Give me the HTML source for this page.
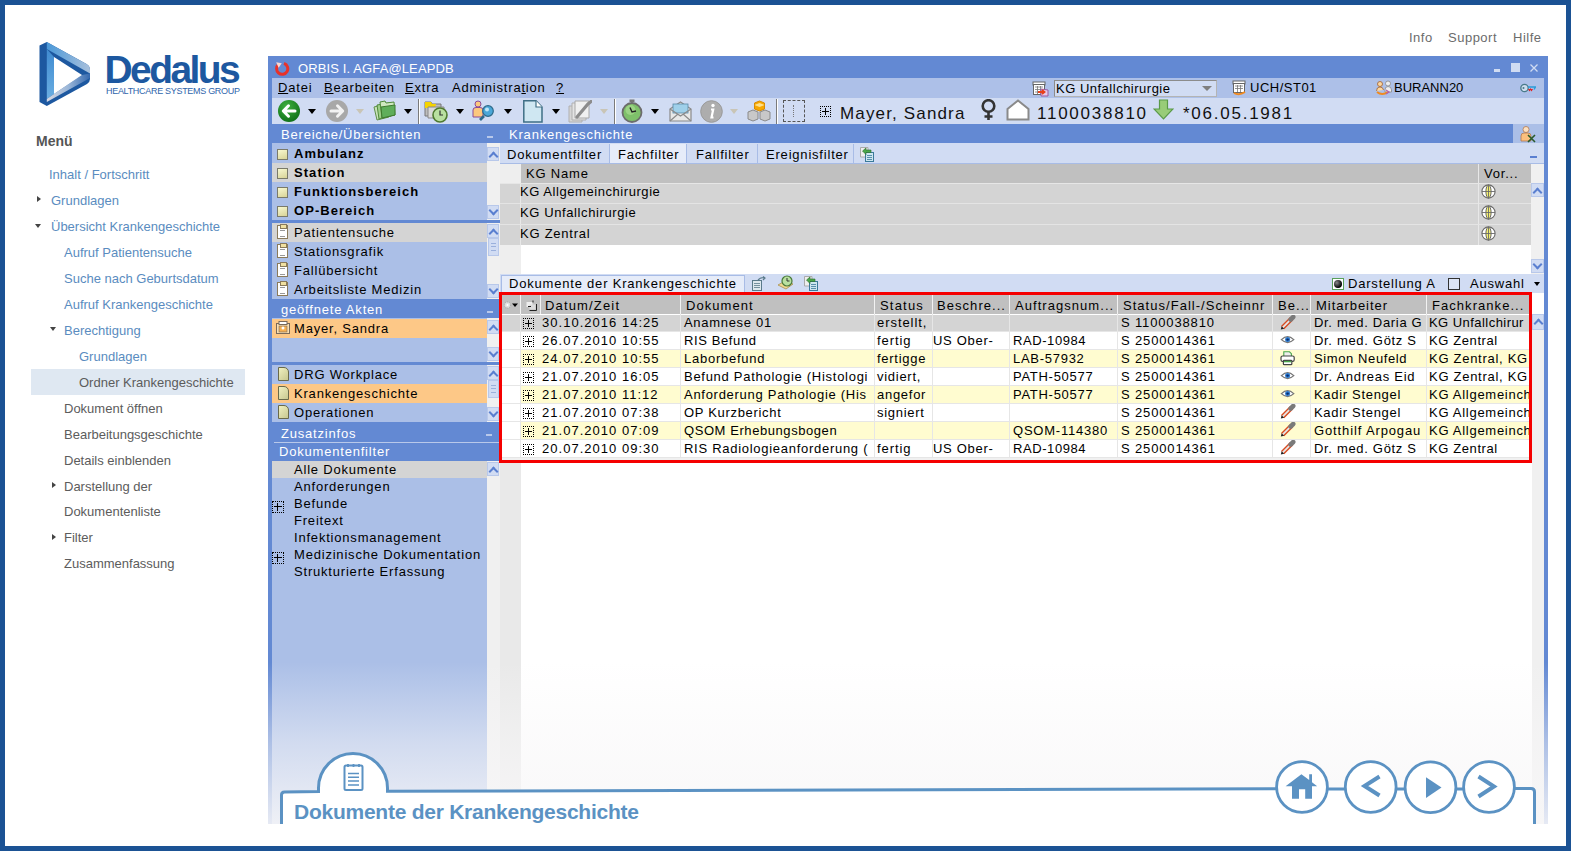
<!DOCTYPE html>
<html><head><meta charset="utf-8">
<style>
*{box-sizing:border-box}
html,body{margin:0;padding:0}
body{width:1571px;height:851px;position:relative;overflow:hidden;background:#fff;font-family:"Liberation Sans",sans-serif;color:#000}
.a{position:absolute}
.t{position:absolute;white-space:nowrap;line-height:1}
.app{font-size:13px;letter-spacing:0.8px}
.menu .t{font-size:13px;color:#5a8cc0}
.menu .g{color:#5c5c5c}
.b{font-weight:bold;letter-spacing:1.05px}
.sq{position:absolute;left:9px;width:11px;height:11px;background:linear-gradient(160deg,#f8f8d0,#d8d498);border:1px solid #7a7a6a}
.clip{position:absolute;left:9px;width:11px;height:14px;background:#fff;border:1px solid #8a7a5a}
.clip:after{content:"";position:absolute;left:2px;top:-2px;width:5px;height:3px;background:#f0e0a0;border:1px solid #8a7a5a}
.clip:before{content:"";position:absolute;left:2px;top:4px;width:5px;height:5px;border-top:1px solid #999;border-bottom:1px solid #999}
.pg{position:absolute;left:10px;width:11px;height:14px;background:linear-gradient(135deg,#f0f0c0,#c8c890);border:1px solid #6a6a4a;border-radius:0 5px 0 0}
.pb{position:absolute;left:4px;width:12px;height:12px;border:1px dotted #000}
.pb:after{content:"";position:absolute;left:4px;top:1px;width:1px;height:8px;background:#000}
.pb:before{content:"";position:absolute;left:1px;top:4px;width:8px;height:1px;background:#000}
.sbu,.sbd{position:absolute;width:12px;height:14px;background:#d1dcf3;border:1px solid #b8c8ea}
.sbu:after,.sbd:after{content:"";position:absolute;left:2px;width:5px;height:5px;border-left:2px solid #5a7fd0;border-top:2px solid #5a7fd0}
.sbu:after{top:5px;transform:rotate(45deg)}
.sbd:after{top:1px;transform:rotate(225deg)}
.kgr{position:absolute;left:232px;width:1031px;height:20px;background:#d4d4d4;border-bottom:1px solid #e4e4e4}
.kgr:before{content:"";position:absolute;left:20px;top:0;width:1px;height:20px;background:#e8e8e8}
.kgr:after{content:"";position:absolute;left:978px;top:0;width:1px;height:20px;background:#e8e8e8}
.glb{position:absolute;left:1213px;width:15px;height:15px}
.pb2{position:absolute;width:11px;height:11px;border:1px dotted #000}
.pb2:before{content:"";position:absolute;left:1px;top:4px;width:7px;height:1px;background:#000}
.pb2:after{content:"";position:absolute;left:4px;top:1px;width:1px;height:7px;background:#000}
.app .t{margin-top:-1px}
.tri{position:absolute;width:0;height:0}
</style></head>
<body>
<!-- outer frame -->
<div class="a" style="left:0;top:0;width:1571px;height:851px;border:5px solid #1b5294"></div>

<!-- top links -->
<div class="t" style="left:1409px;top:31px;font-size:13px;color:#6b6b6b;letter-spacing:0.5px">Info</div>
<div class="t" style="left:1448px;top:31px;font-size:13px;color:#6b6b6b;letter-spacing:0.5px">Support</div>
<div class="t" style="left:1513px;top:31px;font-size:13px;color:#6b6b6b;letter-spacing:0.5px">Hilfe</div>

<!-- logo -->
<svg class="a" style="left:30px;top:35px" width="70" height="80" viewBox="30 35 70 80">
  <defs>
    <linearGradient id="lgt" x1="0" y1="0" x2="1" y2="0"><stop offset="0" stop-color="#4a98d8"/><stop offset="1" stop-color="#a8c0dc"/></linearGradient>
    <linearGradient id="lgb" x1="0" y1="0" x2="1" y2="0"><stop offset="0" stop-color="#d8d8e2"/><stop offset="0.5" stop-color="#9ab6d8"/><stop offset="1" stop-color="#3468ae"/></linearGradient>
    <linearGradient id="lgl" x1="0" y1="0" x2="0" y2="1"><stop offset="0" stop-color="#3f8ad0"/><stop offset="1" stop-color="#6aaee2"/></linearGradient>
  </defs>
  <path d="M39.5 45.5 L46.8 42 L86.5 64 Q90 66 90 70 L90 79 Q90 82 87 84 L46.8 106 L39.5 102 Z" fill="#1d58a0"/>
  <path d="M46.8 42 L86.5 64 Q90 66 90 70 L90 73.5 L46.8 49 Z" fill="url(#lgt)"/>
  <path d="M46.8 49 L54 57 L54 94 L46.8 99 Z" fill="url(#lgl)"/>
  <path d="M54 94 L82 75 L90 73.5 L90 78 L46.8 102 L46.8 99 Z" fill="url(#lgb)"/>
  <path d="M54 57 L82 75 L54 94 Z" fill="#fff"/>
</svg>
<div class="t" style="left:104.5px;top:50px;font-size:39px;font-weight:bold;color:#1d58a0;letter-spacing:-2.6px">Dedalus</div>
<div class="t" style="left:106px;top:87px;font-size:9px;color:#2d64ab;letter-spacing:-0.3px">HEALTHCARE SYSTEMS GROUP</div>

<!-- left menu -->
<div class="menu">
<div class="t" style="left:36px;top:134px;font-size:14px;font-weight:bold;color:#555">Menü</div>
<div class="t" style="left:49px;top:168px">Inhalt / Fortschritt</div>
<div class="t" style="left:51px;top:194px">Grundlagen</div>
<div class="t" style="left:51px;top:220px">Übersicht Krankengeschichte</div>
<div class="t" style="left:64px;top:246px">Aufruf Patientensuche</div>
<div class="t" style="left:64px;top:272px">Suche nach Geburtsdatum</div>
<div class="t" style="left:64px;top:298px">Aufruf Krankengeschichte</div>
<div class="t" style="left:64px;top:324px">Berechtigung</div>
<div class="t" style="left:79px;top:350px">Grundlagen</div>
<div class="a" style="left:31px;top:369px;width:214px;height:26px;background:#dfe8f2"></div>
<div class="t g" style="left:79px;top:376px">Ordner Krankengeschichte</div>
<div class="t g" style="left:64px;top:402px">Dokument öffnen</div>
<div class="t g" style="left:64px;top:428px">Bearbeitungsgeschichte</div>
<div class="t g" style="left:64px;top:454px">Details einblenden</div>
<div class="t g" style="left:64px;top:480px">Darstellung der</div>
<div class="t g" style="left:64px;top:505px">Dokumentenliste</div>
<div class="t g" style="left:64px;top:531px">Filter</div>
<div class="t g" style="left:64px;top:557px">Zusammenfassung</div>
<div class="tri" style="left:37px;top:196px;border-top:3.5px solid transparent;border-bottom:3.5px solid transparent;border-left:4px solid #444"></div>
<div class="tri" style="left:35px;top:224px;border-left:3.5px solid transparent;border-right:3.5px solid transparent;border-top:4px solid #444"></div>
<div class="tri" style="left:49.5px;top:327px;border-left:3.5px solid transparent;border-right:3.5px solid transparent;border-top:4px solid #444"></div>
<div class="tri" style="left:52px;top:481.5px;border-top:3.5px solid transparent;border-bottom:3.5px solid transparent;border-left:4px solid #444"></div>
<div class="tri" style="left:52px;top:534px;border-top:3.5px solid transparent;border-bottom:3.5px solid transparent;border-left:4px solid #444"></div>
</div>
<!-- APP WINDOW -->
<div class="a app" style="left:268px;top:56px;width:1280px;height:768px;background:#6389d3;overflow:hidden">
<!-- title bar -->
<svg class="a" style="left:6px;top:5px" width="16" height="16" viewBox="0 0 16 16"><path d="M4.6 3.4 A5.6 5.6 0 1 0 10 2.4" fill="none" stroke="#e8322a" stroke-width="3"/><path d="M2.2 1.2 L7.8 2.2 L4.6 6.8 Z" fill="#fbd8d0"/></svg>
<div class="t" style="left:30px;top:7px;color:#fff;letter-spacing:0.12px">ORBIS I. AGFA@LEAPDB</div>
<div class="a" style="left:1226px;top:13px;width:6px;height:3px;background:#d0dcf2"></div>
<div class="a" style="left:1243px;top:7px;width:9px;height:9px;background:#d0dcf2"></div>
<svg class="a" style="left:1262px;top:8px" width="8" height="8"><path d="M0.5 0.5 L7.5 7.5 M7.5 0.5 L0.5 7.5" stroke="#d0dcf2" stroke-width="1.3"/></svg>
<!-- menu bar -->
<div class="a" style="left:4px;top:22px;width:1272px;height:20px;background:#adc0e8"></div>
<div class="t" style="left:10px;top:26px"><u>D</u>atei</div>
<div class="t" style="left:56px;top:26px"><u>B</u>earbeiten</div>
<div class="t" style="left:137px;top:26px"><u>E</u>xtra</div>
<div class="t" style="left:184px;top:26px">Administra<u>t</u>ion</div>
<div class="t" style="left:288px;top:26px"><u>?</u></div>
<!-- toolbar -->
<div class="a" style="left:4px;top:42px;width:1272px;height:26px;background:#d1dcf3"></div>
<!-- back -->
<svg class="a" style="left:9px;top:43px" width="24" height="24" viewBox="0 0 24 24"><defs><radialGradient id="gb" cx="0.4" cy="0.3" r="0.8"><stop offset="0" stop-color="#3fb03f"/><stop offset="1" stop-color="#0b6a14"/></radialGradient></defs><circle cx="12" cy="12" r="11" fill="url(#gb)"/><path d="M18 12 H7 M11.5 6.8 L6.3 12 L11.5 17.2" fill="none" stroke="#fff" stroke-width="3" stroke-linecap="round" stroke-linejoin="round"/></svg>
<div class="tri" style="left:40px;top:53px;border-left:4px solid transparent;border-right:4px solid transparent;border-top:5px solid #000"></div>
<svg class="a" style="left:57px;top:43px" width="24" height="24" viewBox="0 0 24 24"><circle cx="12" cy="12" r="11" fill="#a8a8a8"/><path d="M6 12 H17 M12.5 6.8 L17.7 12 L12.5 17.2" fill="none" stroke="#f2f2f2" stroke-width="3" stroke-linecap="round" stroke-linejoin="round"/></svg>
<div class="tri" style="left:88px;top:53px;border-left:4px solid transparent;border-right:4px solid transparent;border-top:5px solid #c9c5b6"></div>
<!-- folders -->
<svg class="a" style="left:105px;top:44px" width="24" height="22" viewBox="0 0 24 22"><path d="M1 7 L13 4 L16 17 L4 20 Z" fill="#c8e3b8" stroke="#5f8f4a" stroke-width="1"/><path d="M4 5 L16 3 L18 16 L6 19 Z" fill="#9fcf8a" stroke="#4f8a3a" stroke-width="1"/><path d="M7 2 L12 1 L13 3 L21 2 L22 15 L9 18 Z" fill="#cfe8c0" stroke="#4f8a3a" stroke-width="1"/><path d="M8 7 L22 5 L22 15 L9 18 Z" fill="#5fae5a" stroke="#3f7a2f" stroke-width="1"/></svg>
<div class="tri" style="left:136px;top:53px;border-left:4px solid transparent;border-right:4px solid transparent;border-top:5px solid #000"></div>
<div class="a" style="left:150px;top:43px;width:1px;height:25px;background:#7a7a7a"></div>
<div class="a" style="left:151px;top:43px;width:1px;height:25px;background:#fff"></div>
<!-- folder clock -->
<svg class="a" style="left:156px;top:43px" width="25" height="24" viewBox="0 0 25 24"><path d="M1 3 L7 3 L8 5 L17 5 L17 17 L1 17 Z" fill="#bdbdbd" stroke="#777" stroke-width="1"/><path d="M1 3 L7 3 L8 5 L12 5 L11 9 L1 9 Z" fill="#f5d300"/><path d="M4 8 L20 8 L20 19 L4 19 Z" fill="#d9d9d9" stroke="#888" stroke-width="1"/><circle cx="16" cy="16" r="7" fill="#b9e0a0" stroke="#4f7a2f" stroke-width="1.6"/><path d="M16 11.5 V16 H19" fill="none" stroke="#333" stroke-width="1.2"/></svg>
<div class="tri" style="left:188px;top:53px;border-left:4px solid transparent;border-right:4px solid transparent;border-top:5px solid #000"></div>
<!-- person search -->
<svg class="a" style="left:204px;top:44px" width="24" height="22" viewBox="0 0 24 22"><circle cx="6" cy="4" r="3" fill="#fcc87e" stroke="#8a4a9a" stroke-width="1"/><path d="M1 17 L1 10 Q1 7.5 4 7.5 L8 7.5 Q11 7.5 11 10 L11 17 Z" fill="#fcc87e" stroke="#8a4a9a" stroke-width="1"/><path d="M8 20 L12 16" stroke="#2d6a8a" stroke-width="2.6"/><circle cx="16" cy="11" r="5.3" fill="#4aa7d8" stroke="#2d6a8a" stroke-width="1.2"/><circle cx="15" cy="9.5" r="2" fill="#bfe6f7"/></svg>
<div class="tri" style="left:236px;top:53px;border-left:4px solid transparent;border-right:4px solid transparent;border-top:5px solid #000"></div>
<!-- document -->
<svg class="a" style="left:255px;top:44px" width="20" height="23" viewBox="0 0 20 23"><path d="M0.8 0.8 L13 0.8 L19 7 L19 22 L0.8 22 Z" fill="#cfe7f2" stroke="#3f6f86" stroke-width="1.5"/><path d="M13 0.8 L13 7 L19 7" fill="#fff" stroke="#3f6f86" stroke-width="1.2"/></svg>
<div class="tri" style="left:284px;top:53px;border-left:4px solid transparent;border-right:4px solid transparent;border-top:5px solid #000"></div>
<!-- edit doc faded -->
<svg class="a" style="left:300px;top:44px" width="24" height="23" viewBox="0 0 24 23"><path d="M1 6 L14 6 L14 22 L1 22 Z" fill="#d6d6d6" stroke="#b0b0b0"/><path d="M4 3 L18 3 L18 20 L4 20 Z" fill="#e4e4e4" stroke="#b0b0b0"/><path d="M7 1 L21 1 L21 18 L7 18 Z" fill="#f0f0f0" stroke="#a8a8a8"/><path d="M9 17 L20 4 L23 1.5" stroke="#8c8c8c" stroke-width="3.2" stroke-linecap="round"/></svg>
<div class="tri" style="left:332px;top:53px;border-left:4px solid transparent;border-right:4px solid transparent;border-top:5px solid #c9c5b6"></div>
<div class="a" style="left:346px;top:43px;width:1px;height:25px;background:#7a7a7a"></div>
<div class="a" style="left:347px;top:43px;width:1px;height:25px;background:#fff"></div>
<!-- stopwatch -->
<svg class="a" style="left:353px;top:43px" width="22" height="24" viewBox="0 0 22 24"><rect x="8.5" y="0.5" width="5" height="2.5" fill="#777"/><circle cx="11" cy="13.5" r="9.5" fill="#7ec06a" stroke="#6c6c6c" stroke-width="1.8"/><circle cx="9.5" cy="11" r="5" fill="#a8dc90" opacity="0.7"/><path d="M9 8.5 L11 13 L15 12" fill="none" stroke="#222" stroke-width="1.4"/></svg>
<div class="tri" style="left:383px;top:53px;border-left:4px solid transparent;border-right:4px solid transparent;border-top:5px solid #000"></div>
<!-- envelope -->
<svg class="a" style="left:401px;top:44px" width="23" height="22" viewBox="0 0 23 22"><path d="M1 9 L11.5 2 L22 9 L22 21 L1 21 Z" fill="#e8e8e8" stroke="#8a8a8a" stroke-width="1.2"/><rect x="4" y="4" width="15" height="9" fill="#9fd0ea" stroke="#5a8aa8" stroke-width="0.8"/><path d="M1 9 L11.5 16 L22 9 M1 21 L9 14 M22 21 L14 14" fill="none" stroke="#8a8a8a" stroke-width="1.2"/></svg>
<!-- info -->
<svg class="a" style="left:432px;top:44px" width="23" height="23" viewBox="0 0 23 23"><circle cx="11.5" cy="11.5" r="10.8" fill="#adadad" stroke="#9a9a9a"/><circle cx="13" cy="5.5" r="1.7" fill="#fff"/><path d="M11 9.5 L13.2 9.5 L11.5 17.5 L13.5 17.5" fill="none" stroke="#fff" stroke-width="2.2"/></svg>
<div class="tri" style="left:462px;top:53px;border-left:4px solid transparent;border-right:4px solid transparent;border-top:5px solid #c9c5b6"></div>
<!-- cubes -->
<svg class="a" style="left:479px;top:44px" width="25" height="22" viewBox="0 0 25 22"><path d="M7.5 1 L12.5 3 L12.5 9 L7.5 11 L2.5 9 L2.5 3 Z" transform="translate(5,0)" fill="#f7a800" stroke="#d88a00"/><path d="M12.5 3 L17.5 5 L12.5 7 L7.5 5 Z" fill="#ffe08a"/><path d="M1 12 L6 10 L11 12 L11 19 L6 21 L1 19 Z" fill="#c8c8c8" stroke="#8a8a8a"/><path d="M13 12 L18 10 L23 12 L23 19 L18 21 L13 19 Z" fill="#c8c8c8" stroke="#8a8a8a"/></svg>
<div class="a" style="left:508px;top:43px;width:1px;height:25px;background:#7a7a7a"></div>
<div class="a" style="left:509px;top:43px;width:1px;height:25px;background:#fff"></div>
<!-- dotted -->
<div class="a" style="left:515px;top:44px;width:22px;height:22px;border:1px dashed #555"></div>
<div class="a" style="left:525px;top:49px;width:2px;height:12px;border-left:1px dotted #777"></div>
<div class="pb2" style="left:552px;top:50px"></div>
<div class="t" style="left:572px;top:50px;font-size:17px;letter-spacing:1.15px;color:#111">Mayer, Sandra</div>
<!-- female -->
<svg class="a" style="left:712px;top:43px" width="17" height="22" viewBox="0 0 17 22"><circle cx="8.5" cy="7" r="5.8" fill="none" stroke="#333" stroke-width="2.6"/><path d="M8.5 13 V21 M4.5 17.5 H12.5" stroke="#333" stroke-width="2.6"/></svg>
<!-- house -->
<svg class="a" style="left:738px;top:43px" width="24" height="22" viewBox="0 0 24 22"><path d="M1.5 20.5 L1.5 10 L12 1.5 L22.5 10 L22.5 20.5 Z" fill="#fff" stroke="#8a8a8a" stroke-width="2"/></svg>
<div class="t" style="left:769px;top:50px;font-size:17px;letter-spacing:1.75px;color:#111">1100038810</div>
<!-- down arrow -->
<svg class="a" style="left:885px;top:43px" width="21" height="21" viewBox="0 0 21 21"><path d="M6.5 1 L14.5 1 L14.5 10 L20 10 L10.5 20 L1 10 L6.5 10 Z" fill="#98cc78" stroke="#5a9a48" stroke-width="1.2"/></svg>
<div class="t" style="left:915px;top:50px;font-size:17px;letter-spacing:1.75px;color:#111">*06.05.1981</div>
<!-- menu bar right -->
<svg class="a" style="left:764px;top:25px" width="17" height="16" viewBox="0 0 17 16"><rect x="1" y="1" width="12" height="3" fill="#fff" stroke="#666"/><rect x="1.5" y="3.5" width="11" height="10" fill="#fff" stroke="#666"/><path d="M3 6 H11 M3 8.5 H11 M3 11 H11 M5.5 5 V13 M8.5 5 V13" stroke="#777" stroke-width="0.8"/><path d="M9 8 L16 9 L16 15 L9 15 Z" fill="#e8c9e8" stroke="#9a5aa0"/><path d="M6 11 H12 M10 9 L12.5 11 L10 13" fill="none" stroke="#e8401a" stroke-width="1.8"/></svg>
<div class="a" style="left:786px;top:24px;width:163px;height:17px;background:#d1dcf3;border:1px solid #b4b4b4;border-top-color:#8c8c8c;border-left-color:#8c8c8c"></div>
<div class="t" style="left:788px;top:27px;letter-spacing:0.5px">KG Unfallchirurgie</div>
<div class="tri" style="left:934px;top:30px;border-left:5px solid transparent;border-right:5px solid transparent;border-top:5px solid #7f7f7f"></div>
<svg class="a" style="left:964px;top:24px" width="16" height="16" viewBox="0 0 16 16"><rect x="1" y="1" width="12" height="3" fill="#fff" stroke="#666"/><rect x="1.5" y="3.5" width="11" height="9" fill="#fff" stroke="#666"/><path d="M3 6 H11 M3 8.5 H11 M5.5 5 V12 M8.5 5 V12" stroke="#777" stroke-width="0.8"/><path d="M2 13 Q7 16 13 12" fill="none" stroke="#f08a20" stroke-width="2"/></svg>
<div class="t" style="left:982px;top:26px;letter-spacing:0.5px">UCH/ST01</div>
<svg class="a" style="left:1108px;top:24px" width="17" height="16" viewBox="0 0 17 16"><circle cx="4" cy="4" r="2.5" fill="#fcd7a0" stroke="#a06030" stroke-width="0.8"/><circle cx="12" cy="3.5" r="2.5" fill="#eee" stroke="#888" stroke-width="0.8"/><path d="M0.5 11 Q0.5 7 4 7 Q7 7 7.5 10" fill="#fcd7a0" stroke="#a06030" stroke-width="0.8"/><path d="M9 10 Q9 6.5 12 6.5 Q15.5 6.5 15.5 10 L15.5 12 L9 12 Z" fill="#eee" stroke="#888" stroke-width="0.8"/><path d="M1 12 Q6 16 12 12" fill="none" stroke="#f08a20" stroke-width="2"/><path d="M10 10 L13 12 L10 14" fill="none" stroke="#b060b0" stroke-width="1.2"/></svg>
<div class="t" style="left:1126px;top:26px;letter-spacing:0">BURANN20</div>
<svg class="a" style="left:1252px;top:27px" width="16" height="10" viewBox="0 0 16 10"><circle cx="4.5" cy="5" r="3.7" fill="#cde" stroke="#4a7a8a" stroke-width="1.3"/><circle cx="3.5" cy="5" r="1" fill="#4a7a8a"/><path d="M8 4 H15.5 L14 6.5" fill="none" stroke="#2a9ad8" stroke-width="1.4"/><path d="M8.5 6 L9.5 7.5 L10.5 6 L11.5 7.5 L12.5 6" fill="none" stroke="#e02020" stroke-width="1.1"/></svg>
<!-- LEFT PANEL (app coords) -->
<div class="t" style="left:13px;top:73px;color:#fff">Bereiche/Übersichten</div>
<div class="a" style="left:219px;top:80px;width:6px;height:2px;background:#b8c8ea"></div>
<!-- list1 -->
<div class="a" style="left:4px;top:87px;width:215px;height:77px;background:#abbfe7"></div>
<div class="a" style="left:4px;top:107px;width:215px;height:19px;background:#d4d4d4"></div>
<div class="a" style="left:219px;top:87px;width:13px;height:77px;background:#f0f0f0"></div>
<div class="sq" style="top:93px"></div><div class="t b" style="left:26px;top:92px">Ambulanz</div>
<div class="sq" style="top:112px"></div><div class="t b" style="left:26px;top:111px">Station</div>
<div class="sq" style="top:131px"></div><div class="t b" style="left:26px;top:130px">Funktionsbereich</div>
<div class="sq" style="top:150px"></div><div class="t b" style="left:26px;top:149px">OP-Bereich</div>
<div class="sbu" style="left:219px;top:91px"></div>
<div class="sbd" style="left:219px;top:149px"></div>
<div class="a" style="left:4px;top:164px;width:228px;height:3px;background:#6389d3"></div>
<!-- list2 -->
<div class="a" style="left:4px;top:167px;width:215px;height:76px;background:#abbfe7"></div>
<div class="a" style="left:4px;top:167px;width:215px;height:19px;background:#d4d4d4"></div>
<div class="a" style="left:219px;top:167px;width:13px;height:76px;background:#f0f0f0"></div>
<div class="clip" style="top:169px"></div><div class="t" style="left:26px;top:171px">Patientensuche</div>
<div class="clip" style="top:188px"></div><div class="t" style="left:26px;top:190px">Stationsgrafik</div>
<div class="clip" style="top:207px"></div><div class="t" style="left:26px;top:209px">Fallübersicht</div>
<div class="clip" style="top:226px"></div><div class="t" style="left:26px;top:228px">Arbeitsliste Medizin</div>
<div class="sbu" style="left:219px;top:168px"></div>
<div class="a" style="left:220px;top:182px;width:11px;height:18px;background:#d1dcf3;border:1px solid #b8c8ea"></div>
<div class="a" style="left:223px;top:187px;width:5px;height:8px;border-top:1px solid #9ab0dc;border-bottom:1px solid #9ab0dc"></div>
<div class="a" style="left:223px;top:190px;width:5px;height:1px;background:#9ab0dc"></div>
<div class="sbd" style="left:219px;top:228px"></div>
<!-- header geöffnete Akten -->
<div class="t" style="left:13px;top:248px;color:#fff">geöffnete Akten</div>
<div class="a" style="left:219px;top:255px;width:6px;height:2px;background:#b8c8ea"></div>
<!-- list3 -->
<div class="a" style="left:4px;top:262px;width:215px;height:44px;background:#abbfe7"></div>
<div class="a" style="left:4px;top:263px;width:215px;height:19px;background:#fdc887"></div>
<div class="a" style="left:219px;top:262px;width:13px;height:44px;background:#f0f0f0"></div>
<svg class="a" style="left:8px;top:265px" width="14" height="13" viewBox="0 0 14 13"><rect x="0.5" y="2.5" width="13" height="10" fill="#fde0b0" stroke="#7a6a5a"/><rect x="3" y="0.5" width="8" height="3" fill="#fff" stroke="#7a6a5a"/><rect x="3" y="5" width="8" height="6" fill="#f8b050" stroke="#7a6a5a" stroke-width="0.6"/><circle cx="7" cy="7" r="1.5" fill="#fff"/></svg>
<div class="t" style="left:26px;top:267px">Mayer, Sandra</div>
<div class="sbu" style="left:219px;top:264px"></div>
<div class="sbd" style="left:219px;top:291px"></div>
<div class="a" style="left:4px;top:306px;width:228px;height:3px;background:#6389d3"></div>
<!-- list4 -->
<div class="a" style="left:4px;top:309px;width:215px;height:57px;background:#abbfe7"></div>
<div class="a" style="left:4px;top:328px;width:215px;height:19px;background:#fdc887"></div>
<div class="a" style="left:219px;top:309px;width:13px;height:57px;background:#f0f0f0"></div>
<div class="pg" style="top:311px"></div><div class="t" style="left:26px;top:313px">DRG Workplace</div>
<div class="pg" style="top:330px"></div><div class="t" style="left:26px;top:332px">Krankengeschichte</div>
<div class="pg" style="top:349px"></div><div class="t" style="left:26px;top:351px">Operationen</div>
<div class="sbu" style="left:219px;top:310px"></div>
<div class="a" style="left:220px;top:324px;width:11px;height:18px;background:#d1dcf3;border:1px solid #b8c8ea"></div>
<div class="a" style="left:223px;top:329px;width:5px;height:8px;border-top:1px solid #9ab0dc;border-bottom:1px solid #9ab0dc"></div>
<div class="a" style="left:223px;top:332px;width:5px;height:1px;background:#9ab0dc"></div>
<div class="sbd" style="left:219px;top:351px"></div>
<!-- Zusatzinfos -->
<div class="t" style="left:13px;top:372px;color:#fff">Zusatzinfos</div>
<div class="a" style="left:218px;top:378px;width:6px;height:2px;background:#b8c8ea"></div>
<div class="a" style="left:6px;top:386px;width:226px;height:1px;background:#b8c8ea"></div>
<div class="t" style="left:11px;top:390px;color:#fff">Dokumentenfilter</div>
<!-- list5 -->
<div class="a" style="left:4px;top:405px;width:215px;height:363px;background:#abbfe7"></div>
<div class="a" style="left:4px;top:405px;width:215px;height:17px;background:#d4d4d4"></div>
<div class="a" style="left:219px;top:405px;width:13px;height:363px;background:#f0f0f0"></div>
<div class="sbu" style="left:219px;top:406px"></div>
<div class="t" style="left:26px;top:408px">Alle Dokumente</div>
<div class="t" style="left:26px;top:425px">Anforderungen</div>
<div class="pb" style="top:445px"></div><div class="t" style="left:26px;top:442px">Befunde</div>
<div class="t" style="left:26px;top:459px">Freitext</div>
<div class="t" style="left:26px;top:476px">Infektionsmanagement</div>
<div class="pb" style="top:496px"></div><div class="t" style="left:26px;top:493px">Medizinische Dokumentation</div>
<div class="t" style="left:26px;top:510px">Strukturierte Erfassung</div>
<!-- RIGHT PANEL (app coords: x-268,y-56) -->
<div class="t" style="left:241px;top:73px;color:#fff">Krankengeschichte</div>
<div class="a" style="left:1245px;top:68px;width:31px;height:19px;background:#abbfe7"></div>
<svg class="a" style="left:1251px;top:69px" width="18" height="18" viewBox="0 0 18 18"><circle cx="7" cy="4.5" r="3" fill="#fde0c0" stroke="#b07850" stroke-width="0.8"/><path d="M2 16 L2 11 Q2 8 5 8 L9 8 Q12 8 12 11 L12 16 Z" fill="#fcc07e" stroke="#b07850" stroke-width="0.8"/><path d="M9 10 L16 17 M16 10 L9 17" stroke="#2a5a2a" stroke-width="1.6"/></svg>
<!-- tab row -->
<div class="a" style="left:232px;top:87px;width:1044px;height:21px;background:#d1dcf3;border-bottom:1px solid #a8bce6"></div>
<div class="a" style="left:341px;top:88px;width:78px;height:19px;background:#e6ecf9;border-left:1px solid #a8bce6;border-right:1px solid #a8bce6"></div>
<div class="a" style="left:489px;top:88px;width:1px;height:19px;background:#a8bce6"></div>
<div class="a" style="left:585px;top:88px;width:1px;height:19px;background:#a8bce6"></div>
<div class="t" style="left:239px;top:93px">Dokumentfilter</div>
<div class="t" style="left:350px;top:93px">Fachfilter</div>
<div class="t" style="left:428px;top:93px">Fallfilter</div>
<div class="t" style="left:498px;top:93px">Ereignisfilter</div>
<svg class="a" style="left:592px;top:91px" width="15" height="15" viewBox="0 0 15 15"><path d="M0.5 0.5 H8 V10 H0.5 Z" fill="#eee" stroke="#aaa"/><rect x="5.5" y="5.5" width="8" height="9" fill="#cde6f0" stroke="#3a7a9a"/><path d="M7 8.5 H12 M7 10.5 H12 M7 12.5 H12" stroke="#3a7a9a" stroke-width="0.8"/><path d="M2.5 4 L6 1 L6 3 L11 3 L11 5.5 L6 5.5 L6 7.5 Z" fill="#4aa84a" stroke="#2a6a2a" stroke-width="0.6"/></svg>
<div class="a" style="left:1262px;top:100px;width:7px;height:2px;background:#5a7fd0"></div>
<!-- KG grid -->
<div class="a" style="left:232px;top:108px;width:1031px;height:110px;background:#fff"></div>
<div class="a" style="left:232px;top:108px;width:21px;height:110px;background:#eeeeee"></div>
<div class="a" style="left:253px;top:108px;width:1010px;height:19px;background:#c0c0c0"></div>
<div class="a" style="left:1210px;top:108px;width:1px;height:19px;background:#e8e8e8"></div>
<div class="a" style="left:232px;top:127px;width:1031px;height:1px;background:#e6e6e6"></div>
<div class="t" style="left:258px;top:112px">KG Name</div>
<div class="t" style="left:1216px;top:112px">Vor...</div>
<div class="kgr" style="top:128px;height:20px"></div>
<div class="kgr" style="top:148px;height:21px"></div>
<div class="kgr" style="top:169px;height:20px;border-bottom:none"></div>
<div class="t" style="left:252px;top:130px;letter-spacing:0.56px">KG Allgemeinchirurgie</div>
<div class="t" style="left:252px;top:151px;letter-spacing:0.6px">KG Unfallchirurgie</div>
<div class="t" style="left:252px;top:172px;letter-spacing:0.75px">KG Zentral</div>
<div class="glb" style="top:128px"><svg width="15" height="15" viewBox="0 0 15 15"><circle cx="7.5" cy="7.5" r="6.6" fill="#fff" stroke="#6a6a6a" stroke-width="1.1"/><ellipse cx="7.5" cy="7.5" rx="2.6" ry="6.4" fill="#f4f070" stroke="#6a6a6a" stroke-width="1"/><path d="M1 7.5 H14 M7.5 1 V14" stroke="#6a6a6a" stroke-width="0.9"/></svg></div>
<div class="glb" style="top:149px"><svg width="15" height="15" viewBox="0 0 15 15"><circle cx="7.5" cy="7.5" r="6.6" fill="#fff" stroke="#6a6a6a" stroke-width="1.1"/><ellipse cx="7.5" cy="7.5" rx="2.6" ry="6.4" fill="#f4f070" stroke="#6a6a6a" stroke-width="1"/><path d="M1 7.5 H14 M7.5 1 V14" stroke="#6a6a6a" stroke-width="0.9"/></svg></div>
<div class="glb" style="top:170px"><svg width="15" height="15" viewBox="0 0 15 15"><circle cx="7.5" cy="7.5" r="6.6" fill="#fff" stroke="#6a6a6a" stroke-width="1.1"/><ellipse cx="7.5" cy="7.5" rx="2.6" ry="6.4" fill="#f4f070" stroke="#6a6a6a" stroke-width="1"/><path d="M1 7.5 H14 M7.5 1 V14" stroke="#6a6a6a" stroke-width="0.9"/></svg></div>
<div class="a" style="left:1263px;top:108px;width:13px;height:110px;background:#f0f0f0"></div>
<div class="sbu" style="left:1263px;top:127px;width:13px"></div>
<div class="sbd" style="left:1263px;top:203px;width:13px"></div>
<!-- doc toolbar -->
<div class="a" style="left:232px;top:218px;width:1044px;height:19px;background:#d1dcf3"></div>
<div class="a" style="left:233px;top:219px;width:244px;height:18px;background:#e6ecf9;border:1px solid #a8bce6;border-bottom:none"></div>
<div class="t" style="left:241px;top:222px">Dokumente der Krankengeschichte</div>
<svg class="a" style="left:483px;top:220px" width="15" height="15" viewBox="0 0 15 15"><rect x="1.5" y="4.5" width="9" height="10" fill="#dde8ee" stroke="#5a7a8a"/><path d="M3 7.5 H9 M3 9.5 H9 M3 11.5 H9" stroke="#5a7a8a" stroke-width="0.8"/><path d="M7 4 Q10 0.5 14 2 M12 0.5 L14 2 L12 4" fill="none" stroke="#5a7a8a" stroke-width="1.2"/></svg>
<svg class="a" style="left:509px;top:219px" width="17" height="16" viewBox="0 0 17 16"><path d="M1 10 L9 14 L16 9 L8 6 Z" fill="#f0d890" stroke="#a89050" stroke-width="0.8"/><circle cx="10" cy="6" r="5" fill="#b8e0a0" stroke="#4a7a3a" stroke-width="1.2"/><path d="M10 3 V6 H12.5" fill="none" stroke="#333" stroke-width="1"/></svg>
<svg class="a" style="left:536px;top:220px" width="15" height="15" viewBox="0 0 15 15"><path d="M0.5 0.5 H8 V10 H0.5 Z" fill="#eee" stroke="#aaa"/><rect x="5.5" y="5.5" width="8" height="9" fill="#cde6f0" stroke="#3a7a9a"/><path d="M7 8.5 H12 M7 10.5 H12 M7 12.5 H12" stroke="#3a7a9a" stroke-width="0.8"/><path d="M2.5 4 L6 1 L6 3 L11 3 L11 5.5 L6 5.5 L6 7.5 Z" fill="#4aa84a" stroke="#2a6a2a" stroke-width="0.6"/></svg>
<div class="a" style="left:1064px;top:222px;width:12px;height:12px;background:#fff;border:1px solid #5aa05a"></div>
<div class="a" style="left:1066px;top:224px;width:8px;height:8px;border-radius:50%;background:radial-gradient(circle at 35% 35%,#888,#000 70%)"></div>
<div class="t" style="left:1080px;top:222px">Darstellung A</div>
<div class="a" style="left:1180px;top:222px;width:12px;height:12px;background:#dde5f6;border:1px solid #333"></div>
<div class="t" style="left:1202px;top:222px">Auswahl</div>
<div class="tri" style="left:1266px;top:226px;border-left:3px solid transparent;border-right:3px solid transparent;border-top:4px solid #000"></div>
<!-- doc table area -->
<div class="a" style="left:232px;top:237px;width:1044px;height:531px;background:#fff"></div>
<div class="a" style="left:232px;top:237px;width:21px;height:531px;background:#e9e9e9"></div>
<div class="a" style="left:1264px;top:258px;width:12px;height:510px;background:#f0f0f0"></div>
<div class="sbu" style="left:1264px;top:258px;width:12px;height:16px"></div>
<!-- DOC TABLE -->
<div class="a" style="left:231px;top:236px;width:1033px;height:171px;border:3px solid #f50000;background:#fff"></div>
<div class="a" style="left:234px;top:239px;width:1027px;height:19px;background:#c0c0c0"></div>
<div class="a" style="left:252px;top:239px;width:1px;height:19px;background:#f2f2f2"></div>
<div class="a" style="left:272px;top:239px;width:1px;height:19px;background:#f2f2f2"></div>
<div class="a" style="left:412px;top:239px;width:1px;height:19px;background:#f2f2f2"></div>
<div class="a" style="left:606px;top:239px;width:1px;height:19px;background:#f2f2f2"></div>
<div class="a" style="left:664px;top:239px;width:1px;height:19px;background:#f2f2f2"></div>
<div class="a" style="left:741px;top:239px;width:1px;height:19px;background:#f2f2f2"></div>
<div class="a" style="left:849px;top:239px;width:1px;height:19px;background:#f2f2f2"></div>
<div class="a" style="left:1004px;top:239px;width:1px;height:19px;background:#f2f2f2"></div>
<div class="a" style="left:1042px;top:239px;width:1px;height:19px;background:#f2f2f2"></div>
<div class="a" style="left:1158px;top:239px;width:1px;height:19px;background:#f2f2f2"></div>
<div class="t" style="left:277px;top:244px;letter-spacing:1.16px">Datum/Zeit</div>
<div class="t" style="left:418px;top:244px;letter-spacing:1.05px">Dokument</div>
<div class="t" style="left:612px;top:244px;letter-spacing:1.20px">Status</div>
<div class="t" style="left:669px;top:244px;letter-spacing:1.05px">Beschre...</div>
<div class="t" style="left:747px;top:244px;letter-spacing:1.05px">Auftragsnum...</div>
<div class="t" style="left:855px;top:244px;letter-spacing:1.03px">Status/Fall-/Scheinnr</div>
<div class="t" style="left:1010px;top:244px;letter-spacing:1.05px">Be...</div>
<div class="t" style="left:1048px;top:244px;letter-spacing:0.96px">Mitarbeiter</div>
<div class="t" style="left:1164px;top:244px;letter-spacing:1.05px">Fachkranke...</div>
<svg class="a" style="left:235px;top:244px" width="16" height="10" viewBox="0 0 16 10"><circle cx="4.5" cy="5" r="3.2" fill="#e0e0e0" stroke="#b0b0b0" stroke-width="1.4" stroke-dasharray="1.2 0.8"/><circle cx="4.5" cy="5" r="1" fill="#fff"/><path d="M9 3.5 L15 3.5 L12 7 Z" fill="#000"/></svg>
<svg class="a" style="left:258px;top:244px" width="12" height="12" viewBox="0 0 12 12"><rect x="0.5" y="2" width="6" height="5" fill="#eee"/><rect x="3.5" y="4.5" width="6" height="5" fill="#ddd"/><path d="M2 6.5 H5 M7 0.5 V2.5 M10.5 4 V10.5 H3.5" fill="none" stroke="#222" stroke-width="1"/></svg>
<div class="a" style="left:234px;top:259px;width:1027px;height:16px;background:#d4d4d4"></div>
<div class="a" style="left:234px;top:275px;width:1027px;height:1px;background:#e6e6e6"></div>
<div class="pb2" style="left:255px;top:262px"></div>
<div class="a" style="left:273px;top:261px;width:135px;height:17px;overflow:hidden"><div class="t" style="left:1px;top:0;letter-spacing:1.02px">30.10.2016 14:25</div></div>
<div class="a" style="left:413px;top:261px;width:189px;height:17px;overflow:hidden"><div class="t" style="left:3px;top:0;letter-spacing:0.70px">Anamnese 01</div></div>
<div class="a" style="left:607px;top:261px;width:53px;height:17px;overflow:hidden"><div class="t" style="left:2px;top:0;letter-spacing:0.94px">erstellt,</div></div>
<div class="a" style="left:850px;top:261px;width:150px;height:17px;overflow:hidden"><div class="t" style="left:3px;top:0;letter-spacing:0.85px">S 1100038810</div></div>
<div class="a" style="left:1043px;top:261px;width:111px;height:17px;overflow:hidden"><div class="t" style="left:3px;top:0;letter-spacing:0.68px">Dr. med. Daria G</div></div>
<div class="a" style="left:1159px;top:261px;width:102px;height:17px;overflow:hidden"><div class="t" style="left:2px;top:0;letter-spacing:0.45px">KG Unfallchirur</div></div>
<svg class="a" style="left:1012px;top:259px" width="16" height="16" viewBox="0 0 16 16"><path d="M2.6 12.6 L11.6 3.6" stroke="#d84a20" stroke-width="4.6" stroke-linecap="butt"/><path d="M2.6 12.6 L11.6 3.6" stroke="#e6e6e6" stroke-width="1.8"/><path d="M10.6 4.6 L13.2 2" stroke="#7a7a7a" stroke-width="4.6" stroke-linecap="round"/><path d="M0.8 14.6 L1.6 11.2 L4.2 13.8 Z" fill="#222"/></svg>
<div class="a" style="left:253px;top:276px;width:1008px;height:17px;background:#ffffff"></div>
<div class="a" style="left:234px;top:293px;width:1027px;height:1px;background:#e6e6e6"></div>
<div class="pb2" style="left:255px;top:280px"></div>
<div class="a" style="left:273px;top:279px;width:135px;height:17px;overflow:hidden"><div class="t" style="left:1px;top:0;letter-spacing:1.02px">26.07.2010 10:55</div></div>
<div class="a" style="left:413px;top:279px;width:189px;height:17px;overflow:hidden"><div class="t" style="left:3px;top:0;letter-spacing:0.61px">RIS Befund</div></div>
<div class="a" style="left:607px;top:279px;width:53px;height:17px;overflow:hidden"><div class="t" style="left:2px;top:0;letter-spacing:0.94px">fertig</div></div>
<div class="a" style="left:665px;top:279px;width:72px;height:17px;overflow:hidden"><div class="t" style="left:0px;top:0;letter-spacing:0.70px">US Ober-</div></div>
<div class="a" style="left:742px;top:279px;width:103px;height:17px;overflow:hidden"><div class="t" style="left:3px;top:0;letter-spacing:0.58px">RAD-10984</div></div>
<div class="a" style="left:850px;top:279px;width:150px;height:17px;overflow:hidden"><div class="t" style="left:3px;top:0;letter-spacing:0.85px">S 2500014361</div></div>
<div class="a" style="left:1043px;top:279px;width:111px;height:17px;overflow:hidden"><div class="t" style="left:3px;top:0;letter-spacing:0.68px">Dr. med. Götz S</div></div>
<div class="a" style="left:1159px;top:279px;width:102px;height:17px;overflow:hidden"><div class="t" style="left:2px;top:0;letter-spacing:0.60px">KG Zentral</div></div>
<svg class="a" style="left:1012px;top:277px" width="16" height="16" viewBox="0 0 16 16"><path d="M1.4 6.6 Q7.6 0.6 13.8 6.6 Q7.6 12.4 1.4 6.6 Z" fill="#fff" stroke="#777" stroke-width="1.3"/><circle cx="7.6" cy="6.6" r="2.5" fill="#2a7ad0"/><circle cx="7.6" cy="6.6" r="1.2" fill="#0a2a6a"/></svg>
<div class="a" style="left:253px;top:294px;width:1008px;height:17px;background:#fffcd0"></div>
<div class="a" style="left:234px;top:311px;width:1027px;height:1px;background:#e6e6e6"></div>
<div class="pb2" style="left:255px;top:298px"></div>
<div class="a" style="left:273px;top:297px;width:135px;height:17px;overflow:hidden"><div class="t" style="left:1px;top:0;letter-spacing:1.02px">24.07.2010 10:55</div></div>
<div class="a" style="left:413px;top:297px;width:189px;height:17px;overflow:hidden"><div class="t" style="left:3px;top:0;letter-spacing:0.74px">Laborbefund</div></div>
<div class="a" style="left:607px;top:297px;width:53px;height:17px;overflow:hidden"><div class="t" style="left:2px;top:0;letter-spacing:0.72px">fertigge</div></div>
<div class="a" style="left:742px;top:297px;width:103px;height:17px;overflow:hidden"><div class="t" style="left:3px;top:0;letter-spacing:0.72px">LAB-57932</div></div>
<div class="a" style="left:850px;top:297px;width:150px;height:17px;overflow:hidden"><div class="t" style="left:3px;top:0;letter-spacing:0.85px">S 2500014361</div></div>
<div class="a" style="left:1043px;top:297px;width:111px;height:17px;overflow:hidden"><div class="t" style="left:3px;top:0;letter-spacing:0.61px">Simon Neufeld</div></div>
<div class="a" style="left:1159px;top:297px;width:102px;height:17px;overflow:hidden"><div class="t" style="left:2px;top:0;letter-spacing:0.72px">KG Zentral, KG</div></div>
<svg class="a" style="left:1012px;top:295px" width="16" height="16" viewBox="0 0 16 16"><path d="M3.8 5.5 L3.8 0.8 L9.5 0.8 L11.4 2.7 L11.4 5.5" fill="#eee" stroke="#4aa84a" stroke-width="1.1"/><rect x="1" y="5" width="13.2" height="5.4" rx="1.6" fill="#fff" stroke="#444" stroke-width="1.2"/><rect x="3.4" y="9.4" width="8.4" height="4.3" rx="0.8" fill="#fff" stroke="#444" stroke-width="1.2"/><path d="M4 10.6 H11.2" stroke="#4aa84a" stroke-width="1.4"/></svg>
<div class="a" style="left:253px;top:312px;width:1008px;height:17px;background:#ffffff"></div>
<div class="a" style="left:234px;top:329px;width:1027px;height:1px;background:#e6e6e6"></div>
<div class="pb2" style="left:255px;top:316px"></div>
<div class="a" style="left:273px;top:315px;width:135px;height:17px;overflow:hidden"><div class="t" style="left:1px;top:0;letter-spacing:1.02px">21.07.2010 16:05</div></div>
<div class="a" style="left:413px;top:315px;width:189px;height:17px;overflow:hidden"><div class="t" style="left:3px;top:0;letter-spacing:0.72px">Befund Pathologie (Histologi</div></div>
<div class="a" style="left:607px;top:315px;width:53px;height:17px;overflow:hidden"><div class="t" style="left:2px;top:0;letter-spacing:0.72px">vidiert,</div></div>
<div class="a" style="left:742px;top:315px;width:103px;height:17px;overflow:hidden"><div class="t" style="left:3px;top:0;letter-spacing:0.72px">PATH-50577</div></div>
<div class="a" style="left:850px;top:315px;width:150px;height:17px;overflow:hidden"><div class="t" style="left:3px;top:0;letter-spacing:0.85px">S 2500014361</div></div>
<div class="a" style="left:1043px;top:315px;width:111px;height:17px;overflow:hidden"><div class="t" style="left:3px;top:0;letter-spacing:0.73px">Dr. Andreas Eid</div></div>
<div class="a" style="left:1159px;top:315px;width:102px;height:17px;overflow:hidden"><div class="t" style="left:2px;top:0;letter-spacing:0.72px">KG Zentral, KG</div></div>
<svg class="a" style="left:1012px;top:313px" width="16" height="16" viewBox="0 0 16 16"><path d="M1.4 6.6 Q7.6 0.6 13.8 6.6 Q7.6 12.4 1.4 6.6 Z" fill="#fff" stroke="#777" stroke-width="1.3"/><circle cx="7.6" cy="6.6" r="2.5" fill="#2a7ad0"/><circle cx="7.6" cy="6.6" r="1.2" fill="#0a2a6a"/></svg>
<div class="a" style="left:253px;top:330px;width:1008px;height:17px;background:#fffcd0"></div>
<div class="a" style="left:234px;top:347px;width:1027px;height:1px;background:#e6e6e6"></div>
<div class="pb2" style="left:255px;top:334px"></div>
<div class="a" style="left:273px;top:333px;width:135px;height:17px;overflow:hidden"><div class="t" style="left:1px;top:0;letter-spacing:1.02px">21.07.2010 11:12</div></div>
<div class="a" style="left:413px;top:333px;width:189px;height:17px;overflow:hidden"><div class="t" style="left:3px;top:0;letter-spacing:0.72px">Anforderung Pathologie (His</div></div>
<div class="a" style="left:607px;top:333px;width:53px;height:17px;overflow:hidden"><div class="t" style="left:2px;top:0;letter-spacing:0.72px">angefor</div></div>
<div class="a" style="left:742px;top:333px;width:103px;height:17px;overflow:hidden"><div class="t" style="left:3px;top:0;letter-spacing:0.72px">PATH-50577</div></div>
<div class="a" style="left:850px;top:333px;width:150px;height:17px;overflow:hidden"><div class="t" style="left:3px;top:0;letter-spacing:0.85px">S 2500014361</div></div>
<div class="a" style="left:1043px;top:333px;width:111px;height:17px;overflow:hidden"><div class="t" style="left:3px;top:0;letter-spacing:0.69px">Kadir Stengel</div></div>
<div class="a" style="left:1159px;top:333px;width:102px;height:17px;overflow:hidden"><div class="t" style="left:2px;top:0;letter-spacing:0.72px">KG Allgemeinchirurgie</div></div>
<svg class="a" style="left:1012px;top:331px" width="16" height="16" viewBox="0 0 16 16"><path d="M1.4 6.6 Q7.6 0.6 13.8 6.6 Q7.6 12.4 1.4 6.6 Z" fill="#fff" stroke="#777" stroke-width="1.3"/><circle cx="7.6" cy="6.6" r="2.5" fill="#2a7ad0"/><circle cx="7.6" cy="6.6" r="1.2" fill="#0a2a6a"/></svg>
<div class="a" style="left:253px;top:348px;width:1008px;height:17px;background:#ffffff"></div>
<div class="a" style="left:234px;top:365px;width:1027px;height:1px;background:#e6e6e6"></div>
<div class="pb2" style="left:255px;top:352px"></div>
<div class="a" style="left:273px;top:351px;width:135px;height:17px;overflow:hidden"><div class="t" style="left:1px;top:0;letter-spacing:1.02px">21.07.2010 07:38</div></div>
<div class="a" style="left:413px;top:351px;width:189px;height:17px;overflow:hidden"><div class="t" style="left:3px;top:0;letter-spacing:0.68px">OP Kurzbericht</div></div>
<div class="a" style="left:607px;top:351px;width:53px;height:17px;overflow:hidden"><div class="t" style="left:2px;top:0;letter-spacing:0.72px">signiert</div></div>
<div class="a" style="left:850px;top:351px;width:150px;height:17px;overflow:hidden"><div class="t" style="left:3px;top:0;letter-spacing:0.85px">S 2500014361</div></div>
<div class="a" style="left:1043px;top:351px;width:111px;height:17px;overflow:hidden"><div class="t" style="left:3px;top:0;letter-spacing:0.69px">Kadir Stengel</div></div>
<div class="a" style="left:1159px;top:351px;width:102px;height:17px;overflow:hidden"><div class="t" style="left:2px;top:0;letter-spacing:0.72px">KG Allgemeinchirurgie</div></div>
<svg class="a" style="left:1012px;top:348px" width="16" height="16" viewBox="0 0 16 16"><path d="M2.6 12.6 L11.6 3.6" stroke="#d84a20" stroke-width="4.6" stroke-linecap="butt"/><path d="M2.6 12.6 L11.6 3.6" stroke="#e6e6e6" stroke-width="1.8"/><path d="M10.6 4.6 L13.2 2" stroke="#7a7a7a" stroke-width="4.6" stroke-linecap="round"/><path d="M0.8 14.6 L1.6 11.2 L4.2 13.8 Z" fill="#222"/></svg>
<div class="a" style="left:253px;top:366px;width:1008px;height:17px;background:#fffcd0"></div>
<div class="a" style="left:234px;top:383px;width:1027px;height:1px;background:#e6e6e6"></div>
<div class="pb2" style="left:255px;top:370px"></div>
<div class="a" style="left:273px;top:369px;width:135px;height:17px;overflow:hidden"><div class="t" style="left:1px;top:0;letter-spacing:1.02px">21.07.2010 07:09</div></div>
<div class="a" style="left:413px;top:369px;width:189px;height:17px;overflow:hidden"><div class="t" style="left:3px;top:0;letter-spacing:0.57px">QSOM Erhebungsbogen</div></div>
<div class="a" style="left:742px;top:369px;width:103px;height:17px;overflow:hidden"><div class="t" style="left:3px;top:0;letter-spacing:0.77px">QSOM-114380</div></div>
<div class="a" style="left:850px;top:369px;width:150px;height:17px;overflow:hidden"><div class="t" style="left:3px;top:0;letter-spacing:0.85px">S 2500014361</div></div>
<div class="a" style="left:1043px;top:369px;width:111px;height:17px;overflow:hidden"><div class="t" style="left:3px;top:0;letter-spacing:0.87px">Gotthilf Arpogau</div></div>
<div class="a" style="left:1159px;top:369px;width:102px;height:17px;overflow:hidden"><div class="t" style="left:2px;top:0;letter-spacing:0.72px">KG Allgemeinchirurgie</div></div>
<svg class="a" style="left:1012px;top:366px" width="16" height="16" viewBox="0 0 16 16"><path d="M2.6 12.6 L11.6 3.6" stroke="#d84a20" stroke-width="4.6" stroke-linecap="butt"/><path d="M2.6 12.6 L11.6 3.6" stroke="#e6e6e6" stroke-width="1.8"/><path d="M10.6 4.6 L13.2 2" stroke="#7a7a7a" stroke-width="4.6" stroke-linecap="round"/><path d="M0.8 14.6 L1.6 11.2 L4.2 13.8 Z" fill="#222"/></svg>
<div class="a" style="left:253px;top:384px;width:1008px;height:17px;background:#ffffff"></div>
<div class="a" style="left:234px;top:401px;width:1027px;height:1px;background:#e6e6e6"></div>
<div class="pb2" style="left:255px;top:388px"></div>
<div class="a" style="left:273px;top:387px;width:135px;height:17px;overflow:hidden"><div class="t" style="left:1px;top:0;letter-spacing:1.02px">20.07.2010 09:30</div></div>
<div class="a" style="left:413px;top:387px;width:189px;height:17px;overflow:hidden"><div class="t" style="left:3px;top:0;letter-spacing:0.72px">RIS Radiologieanforderung (</div></div>
<div class="a" style="left:607px;top:387px;width:53px;height:17px;overflow:hidden"><div class="t" style="left:2px;top:0;letter-spacing:0.94px">fertig</div></div>
<div class="a" style="left:665px;top:387px;width:72px;height:17px;overflow:hidden"><div class="t" style="left:0px;top:0;letter-spacing:0.70px">US Ober-</div></div>
<div class="a" style="left:742px;top:387px;width:103px;height:17px;overflow:hidden"><div class="t" style="left:3px;top:0;letter-spacing:0.58px">RAD-10984</div></div>
<div class="a" style="left:850px;top:387px;width:150px;height:17px;overflow:hidden"><div class="t" style="left:3px;top:0;letter-spacing:0.85px">S 2500014361</div></div>
<div class="a" style="left:1043px;top:387px;width:111px;height:17px;overflow:hidden"><div class="t" style="left:3px;top:0;letter-spacing:0.68px">Dr. med. Götz S</div></div>
<div class="a" style="left:1159px;top:387px;width:102px;height:17px;overflow:hidden"><div class="t" style="left:2px;top:0;letter-spacing:0.60px">KG Zentral</div></div>
<svg class="a" style="left:1012px;top:384px" width="16" height="16" viewBox="0 0 16 16"><path d="M2.6 12.6 L11.6 3.6" stroke="#d84a20" stroke-width="4.6" stroke-linecap="butt"/><path d="M2.6 12.6 L11.6 3.6" stroke="#e6e6e6" stroke-width="1.8"/><path d="M10.6 4.6 L13.2 2" stroke="#7a7a7a" stroke-width="4.6" stroke-linecap="round"/><path d="M0.8 14.6 L1.6 11.2 L4.2 13.8 Z" fill="#222"/></svg>
<div class="a" style="left:252px;top:258px;width:1px;height:144px;background:#e6e6e6"></div>
<div class="a" style="left:412px;top:258px;width:1px;height:144px;background:#e6e6e6"></div>
<div class="a" style="left:606px;top:258px;width:1px;height:144px;background:#e6e6e6"></div>
<div class="a" style="left:664px;top:258px;width:1px;height:144px;background:#e6e6e6"></div>
<div class="a" style="left:741px;top:258px;width:1px;height:144px;background:#e6e6e6"></div>
<div class="a" style="left:849px;top:258px;width:1px;height:144px;background:#e6e6e6"></div>
<div class="a" style="left:1004px;top:258px;width:1px;height:144px;background:#e6e6e6"></div>
<div class="a" style="left:1042px;top:258px;width:1px;height:144px;background:#e6e6e6"></div>
<div class="a" style="left:1158px;top:258px;width:1px;height:144px;background:#e6e6e6"></div>
<div class="a" style="left:234px;top:402px;width:1027px;height:2px;background:#f0f0f0"></div>
<!--ENDAPP-->
</div>
<!-- BOTTOM OVERLAY -->
<div class="a" style="left:268px;top:662px;width:1280px;height:162px;background:linear-gradient(to bottom,rgba(248,247,248,0) 0%,rgba(248,247,248,0.5) 50%,rgba(248,247,248,0.88) 100%)"></div>
<svg class="a" style="left:268px;top:740px" width="1280" height="84" viewBox="268 740 1280 84">
  <path d="M281.5 824 L281.5 795 Q281.5 792 284.5 792 L318.5 791.6 L318.5 788 A34.5 34.5 0 0 1 387.5 788 L387.5 791.3 L1534.5 788 L1534.5 824 Z" fill="#fff"/>
  <path d="M281.5 824 L281.5 795 Q281.5 792 284.5 792 L318.5 791.6 L318.5 788 A34.5 34.5 0 0 1 387.5 788 L387.5 791.3 L1276 788.8" fill="none" stroke="#5b92c3" stroke-width="3"/>
  <path d="M1328 789 H1345 M1397 789 H1405 M1456 789 H1463 M1515 788.5 H1531 Q1534.5 788.5 1534.5 792 V824" fill="none" stroke="#5b92c3" stroke-width="3"/>
  <g fill="#fff" stroke="#5b92c3" stroke-width="2.8">
    <circle cx="1302" cy="787" r="25.4"/>
    <circle cx="1370.7" cy="787" r="25.4"/>
    <circle cx="1430.5" cy="787.3" r="25.4"/>
    <circle cx="1489" cy="787" r="25.4"/>
  </g>
  <path d="M1285.6 786.2 L1301.4 774.2 L1309.2 780 L1309.2 774.2 L1312 774.2 L1312 782.2 L1317.2 786.2 L1312 786.2 L1312 798.8 L1305.2 798.8 L1305.2 789.3 L1299 789.3 L1299 798.8 L1292 798.8 L1292 786.2 Z" fill="#5b92c3"/>
  <path d="M1379.5 776.5 L1364.5 786 L1379.5 795.5" fill="none" stroke="#5b92c3" stroke-width="4"/>
  <path d="M1426 777.3 L1441.5 787.5 L1426 798 Z" fill="#5b92c3"/>
  <path d="M1478.5 776.5 L1494 786.5 L1478.5 796.5" fill="none" stroke="#5b92c3" stroke-width="4"/>
  <!-- notepad -->
  <rect x="344.5" y="765.5" width="18" height="24.5" rx="1.5" fill="none" stroke="#5b92c3" stroke-width="2"/>
  <path d="M348 767 V764 M353.5 767 V764 M359 767 V764" stroke="#5b92c3" stroke-width="1.8"/>
  <path d="M348 773.5 H359 M348 777.3 H359 M348 781.1 H359 M348 784.9 H359" stroke="#5b92c3" stroke-width="1.5"/>
</svg>
<div class="t" style="left:294px;top:801px;font-size:21px;font-weight:bold;color:#5b92c3;letter-spacing:-0.25px">Dokumente der Krankengeschichte</div>
<!--ENDBODY-->
</body></html>
